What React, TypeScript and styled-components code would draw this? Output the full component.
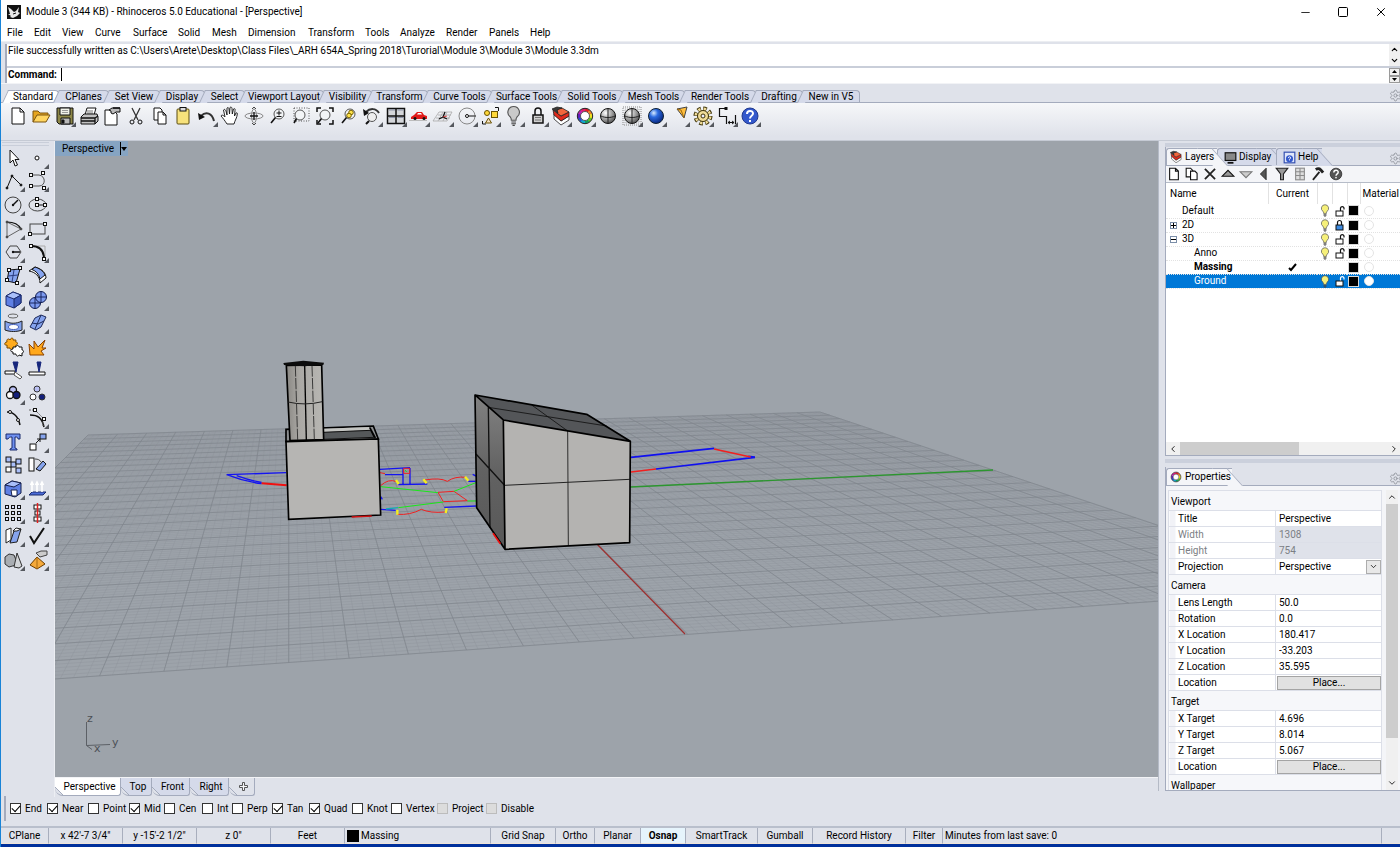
import React, { ReactNode } from 'react';
import styled, { createGlobalStyle, css } from 'styled-components';
import { ChevronDown, ChevronLeft, ChevronRight, ChevronUp, Minus, Settings, Square, X } from 'lucide-react';

const c = {
  chrome: '#dfe2ea',
  light: '#f4f5f8',
  line: '#a4abbd',
  soft: '#c9ced9',
  tab: '#d5daea',
  view: '#9da3aa',
  blue: '#0078d7',
};

const GlobalStyle = createGlobalStyle`
  * { box-sizing: border-box; }
  body { margin: 0; background: ${c.chrome}; color: #000; font: 10px/12px Roboto, "Liberation Sans", sans-serif; }
  button, input, select { font: inherit; color: inherit; margin: 0; padding: 0; border: 0; background: none; border-radius: 0; }
  svg { display: block; }
`;

/* ---------- window frame ---------- */

const Window = styled.div`
  display: flex;
  flex-direction: column;
  height: 100vh;
  min-height: 800px;
  border-left: 1px solid #1883d7;
  overflow: hidden;
`;

const TitleBar = styled.header`
  display: flex;
  align-items: center;
  height: 24px;
  padding-left: 6px;
  background: #fff;
  flex: none;
`;

const Title = styled.h1`
  flex: 1;
  margin: 0 0 0 5px;
  font-size: 10px;
  font-weight: 400;
`;

const WindowButton = styled.button`
  display: grid;
  place-items: center;
  width: 38px;
  height: 24px;
`;

const MenuBar = styled.nav`
  display: flex;
  gap: 12px;
  height: 17px;
  padding: 1px 0 0 6px;
  align-items: center;
  background: #fff;
  flex: none;
`;

const MenuItem = styled.button<{ $w: number }>`
  width: ${p => p.$w}px;
  text-align: left;
  white-space: nowrap;
`;

const CommandArea = styled.section`
  padding: 2px 0 0 4px;
  background: ${c.chrome};
  border-top: 1px solid #eceef2;
  flex: none;
`;

const CommandInner = styled.div`
  border-left: 2px double ${c.line};
  background: #fff;
`;

const History = styled.div`
  display: flex;
  height: 24px;
  justify-content: space-between;
  border-bottom: 2px solid ${c.soft};
`;

const HistoryText = styled.p`
  margin: 0;
  padding-left: 1px;
  line-height: 13px;
`;

const Stepper = styled.div<{ $boxed?: boolean }>`
  display: grid;
  width: 11px;
  background: #f0f0f0;
  button {
    display: grid;
    place-items: center;
    overflow: hidden;
    ${p => p.$boxed && css`border: 1px solid #9a9a9a;`}
  }
`;

const CommandLine = styled.div`
  display: flex;
  height: 15px;
`;

const CommandLabel = styled.label`
  padding-left: 1px;
  font-weight: 700;
  line-height: 14px;
`;

const CommandInput = styled.input`
  flex: 1;
  height: 13px;
  margin-left: 4px;
  border-left: 1px solid #000;
  outline: none;
`;

/* ---------- tool tabs and toolbar ---------- */

const TabStrip = styled.div`
  display: flex;
  align-items: flex-end;
  height: 20px;
  padding-left: 7px;
  border-top: 1px solid #f2f3f6;
  border-bottom: 1px solid ${c.line};
  background: ${c.chrome};
  flex: none;
`;

const ToolTab = styled.button<{ $w: number; $on?: boolean }>`
  position: relative;
  width: ${p => p.$w}px;
  height: 12px;
  border-top: 1px solid ${c.line};
  border-right: 1px solid ${c.line};
  border-radius: 0 4px 0 0;
  background: ${p => (p.$on ? '#fff' : c.tab)};
  white-space: nowrap;
  line-height: 12px;
  &::before {
    content: '';
    position: absolute;
    top: -1px;
    left: -3px;
    width: 7px;
    height: 12px;
    border-left: 1px solid ${c.line};
    border-top: 1px solid ${c.line};
    background: inherit;
    transform: skewX(-25deg);
  }
  span { position: relative; }
`;

const GearButton = styled.button`
  margin-left: auto;
  color: #8b8f98;
  margin-right: -2px;
`;

const Toolbar = styled.div`
  height: 38px;
  padding: 2px 0 0 5px;
  background: linear-gradient(#f6f7f9, ${c.chrome} 90%);
  border-bottom: 1px solid #c5cad4;
  flex: none;
`;

const ToolRow = styled.div`
  display: grid;
  width: 756px;
  grid-template-columns: repeat(32, 1fr);
  justify-items: center;
`;

const ToolButton = styled.button<{ $more?: boolean }>`
  position: relative;
  width: 22px;
  height: 22px;
  ${p => p.$more && css`
    &::after {
      content: '';
      position: absolute;
      right: 0;
      bottom: 0;
      border-left: 5px solid transparent;
      border-bottom: 5px solid #55585e;
    }
  `}
`;

/* ---------- body ---------- */

const Body = styled.div`
  display: grid;
  grid-template-columns: 54px minmax(0, 1fr) 242px;
  flex: 1;
  min-height: 0;
`;

const SideBar = styled.aside`
  padding: 1px 5px 0 1px;
  border-right: 1px solid #eceef3;
`;

const Grip = styled.div`
  height: 4px;
  border: solid ${c.soft};
  border-width: 1px 0;
`;

const SideGrid = styled.div`
  display: grid;
  grid-template: repeat(18, 1fr) / 24px 24px;
  height: 426px;
  place-items: center;
`;

const Center = styled.main`
  display: flex;
  flex-direction: column;
  min-width: 0;
`;

const Viewport = styled.div`
  position: relative;
  flex: 1;
  min-height: 0;
  background: ${c.view};
  overflow: hidden;
  > svg { width: 100%; height: 100%; }
`;

const ViewTitle = styled.button`
  position: absolute;
  top: 0;
  left: 0;
  display: flex;
  align-items: center;
  height: 15px;
  padding: 0 1px 0 7px;
  gap: 6px;
  background: #86a4c2;
  i {
    height: 13px;
    border-left: 1px solid #000;
    display: flex;
    align-items: center;
  }
  i::after {
    content: '';
    border: 3px solid transparent;
    border-top: 4px solid #000;
    border-bottom: 0;
  }
`;

const ViewTabs = styled.div`
  display: flex;
  height: 20px;
  border-top: 1px solid #f2f3f6;
`;

const ViewTab = styled.button<{ $w: number; $on?: boolean; $plain?: boolean }>`
  position: relative;
  display: grid;
  place-items: center;
  width: ${p => p.$w}px;
  height: 18px;
  border: solid ${c.line};
  border-width: 0 1px 1px 0;
  border-radius: 0 0 3px 8px;
  padding-left: 4px;
  background: linear-gradient(45deg, ${c.chrome} 0 5px, ${c.line} 5px 6px, ${p => (p.$on ? '#fff' : p.$plain ? c.chrome : c.tab)} 6px);
`;

/* ---------- right panels ---------- */

const PanelColumn = styled.aside`
  display: flex;
  flex-direction: column;
  min-height: 0;
  padding-left: 6px;
  margin-bottom: 6px;
  border-left: 1px solid #b4bac6;
`;

const Panel = styled.section<{ $grow?: boolean }>`
  display: flex;
  flex-direction: column;
  min-height: 0;
  border: 1px solid ${c.line};
  border-width: 0 0 1px 1px;
  flex: ${p => (p.$grow ? '1 1 0' : '0 0 324px')};
`;

const PanelGrip = styled.div`
  height: 6px;
  background: #cbd0dc;
  border-top: 2px solid ${c.chrome};
  flex: none;
`;

const Divider = styled.div`
  height: 11px;
  border: solid ${c.chrome};
  border-width: 3px 0 4px;
  background: #cbd0dc;
  flex: none;
`;

const PanelTabs = styled.div`
  display: flex;
  align-items: flex-end;
  height: 19px;
  background: ${c.chrome};
  border-bottom: 1px solid ${c.line};
  flex: none;
`;

const PanelTab = styled.button<{ $w: number; $on?: boolean }>`
  position: relative;
  display: flex;
  align-items: center;
  gap: 2px;
  width: ${p => p.$w}px;
  height: 17px;
  padding-left: 2px;
  border-top: 1px solid ${c.line};
  border-left: 1px solid ${c.line};
  border-radius: 3px 0 0 0;
  background: ${p => (p.$on ? c.light : c.tab)};
  white-space: nowrap;
  z-index: ${p => (p.$on ? 2 : 1)};
  & + & { padding-left: 6px; }
  &::after {
    content: '';
    position: absolute;
    z-index: -1;
    top: -1px;
    right: -3px;
    width: 14px;
    height: 17px;
    border-top: 1px solid ${c.line};
    border-right: 1px solid ${c.line};
    background: inherit;
    transform: skewX(42deg);
  }
`;

const LayerTools = styled.div`
  display: flex;
  gap: 2px;
  height: 17px;
  background: ${c.light};
  border-bottom: 1px solid #b6bcc8;
  flex: none;
`;

const LayerTool = styled.button`
  width: 16px;
  height: 16px;
`;

const LayerBody = styled.div`
  flex: 1;
  background: #fff;
  overflow: hidden;
`;

const LayerTable = styled.table`
  width: 100%;
  table-layout: fixed;
  border-collapse: collapse;
  th {
    height: 21px;
    padding: 0 0 0 4px;
    border-right: 1px solid #e2e2e2;
    font-weight: 400;
    text-align: left;
  }
  th:nth-child(2) { text-align: center; padding: 0; }
  th:last-child { border: 0; padding-left: 2px; }
`;

const LayerRow = styled.tr<{ $on?: boolean; $bold?: boolean }>`
  height: 14px;
  font-weight: ${p => (p.$bold ? 700 : 400)};
  color: ${p => (p.$on ? '#fff' : '#000')};
  background: ${p => (p.$on ? c.blue : '#fff')};
  td {
    padding: 0;
    height: 14px;
    line-height: 12px;
    border-bottom: 1px dotted #e2e2e2;
  }
  td svg { margin: auto; }
`;

const LayerName = styled.div<{ $depth: number }>`
  display: flex;
  align-items: center;
  height: 13px;
  gap: 5px;
  padding-left: ${p => 4 + p.$depth * 12}px;
`;

const Expander = styled.button`
  display: grid;
  place-items: center;
  width: 7px;
  height: 7px;
  border: 1px solid #7b8ea8;
  line-height: 5px;
`;

const Spacer = styled.span`
  width: 7px;
`;

const Swatch = styled.span`
  display: block;
  width: 11px;
  height: 11px;
  margin: 0 auto;
  background: #000;
  border: 1px solid #d8d8d8;
`;

const Material = styled.span`
  display: block;
  width: 10px;
  height: 10px;
  margin-left: 4px;
  border: 1px solid #e4e4e4;
  border-radius: 50%;
  background: #fff;
`;

const HScroll = styled.div`
  display: grid;
  grid-template-columns: 14px 119px 1fr 12px;
  height: 13px;
  background: #f0f0f0;
  flex: none;
  place-items: center;
`;

const Thumb = styled.div`
  width: 100%;
  height: 100%;
  background: #cdcdcd;
`;

const PropsBody = styled.div`
  display: flex;
  flex: 1;
  min-height: 0;
  gap: 4px;
  padding: 4px 2px 0 2px;
  background: ${c.light};
`;

const PropsClip = styled.div`
  flex: 1;
  overflow: hidden;
`;

const PropsTable = styled.table`
  width: 100%;
  table-layout: fixed;
  border-collapse: collapse;
  border: 1px solid #dcdfe8;
`;

const SectionRow = styled.tr`
  height: 20px;
  th { padding: 2px 0 0 2px; font-weight: 400; text-align: left; background: #f6f7fa; border-top: 1px solid #dcdfe8; }
`;

const PropRow = styled.tr<{ $off?: boolean }>`
  height: 16px;
  color: ${p => (p.$off ? '#7c7f85' : '#000')};
  th {
    height: 16px;
    padding: 0 0 0 9px;
    font-weight: 400;
    text-align: left;
    background: linear-gradient(to right, #f1f2f7 6px, #fff 6px);
    border: 1px solid #dcdfe8;
  }
  td { height: 16px; padding: 0; background: ${p => (p.$off ? c.chrome : '#fff')}; border: 1px solid #dcdfe8; }
`;

const ValueInput = styled.input`
  display: block;
  width: 100%;
  height: 14px;
  padding-left: 3px;
  outline: none;
`;

const SelectBox = styled.div`
  display: flex;
  height: 14px;
  select { flex: 1; padding-left: 3px; appearance: none; outline: none; min-width: 0; }
  span { display: grid; place-items: center; width: 15px; border: 1px solid #adadad; background: #e8e8e8; }
`;

const PlaceButton = styled.button`
  display: block;
  width: calc(100% - 1px);
  height: 14px;
  margin-left: 1px;
  border: 1px solid #a4a4a4;
  background: #e1e1e1;
`;

const VScroll = styled.div`
  display: grid;
  grid-template-rows: 14px 234px 1fr 14px;
  width: 12px;
  background: #f0f0f0;
  place-items: center;
`;

/* ---------- bottom bars ---------- */

const SnapBar = styled.form`
  display: flex;
  align-items: center;
  height: 25px;
  padding-left: 4px;
  margin: 2px 0 5px 3px;
  border-left: 2px double ${c.line};
  flex: none;
`;

const SnapItem = styled.label<{ $w: number; $off?: boolean }>`
  display: flex;
  align-items: center;
  gap: 4px;
  width: ${p => p.$w}px;
  white-space: nowrap;
  input {
    appearance: none;
    flex: none;
    width: 11px;
    height: 11px;
    border: 1px solid ${p => (p.$off ? '#bcbcbc' : '#333')};
    background: ${p => (p.$off ? '#dcdcdc' : '#fff')};
  }
  input:checked::before {
    content: '';
    display: block;
    width: 7px;
    height: 4px;
    margin: 1px;
    border: solid #000;
    border-width: 0 0 1px 1px;
    transform: rotate(-47deg);
  }
`;

const StatusBar = styled.footer`
  display: flex;
  height: 21px;
  border-top: 2px solid #b9bfcc;
  border-bottom: 3px solid #00309c;
  flex: none;
`;

const StatusCell = styled.button<{ $w?: number; $on?: boolean; $left?: boolean }>`
  display: flex;
  align-items: center;
  justify-content: ${p => (p.$left ? 'flex-start' : 'center')};
  gap: 2px;
  width: ${p => (p.$w ? p.$w + 'px' : 'auto')};
  flex: ${p => (p.$w ? 'none' : '1')};
  padding-left: ${p => (p.$left ? 2 : 0)}px;
  border-right: 1px solid #a8aebd;
  border-bottom: 1px solid #f0e4d8;
  background: ${p => (p.$on ? '#e6f4fc' : 'transparent')};
  font-weight: ${p => (p.$on ? 700 : 400)};
  white-space: nowrap;
`;

const StatusEnd = styled.span`
  width: 18px;
  border-bottom: 1px solid #f0e4d8;
`;

const LayerChip = styled.span`
  width: 12px;
  height: 12px;
  background: #000;
`;

/* ---------- icons, drawn on a 22 x 22 field ---------- */

const k = '#111';
const lens = (x = 12, y = 9, r = 5) => (
  <><circle cx={x} cy={y} r={r} fill="#f3f5f7" stroke="#555" /><path d={`M${x - r * .7} ${y + r * .7}L4 18`} stroke={k} strokeWidth="1.600" /></>
);
const ball = (fill: string, s = k) => <circle cx="11" cy="11" r="7.500" fill={fill} stroke={s} />;
const node = (x: number, y: number, fill = '#fff') => <rect key={`${x},${y}`} x={x - 1.5} y={y - 1.5} width="3" height="3" fill={fill} stroke={k} />;
const hues = ['#e02020', '#f08020', '#f0e020', '#60c820', '#10a060', '#10a8d0', '#2050d0', '#6020c0', '#c020b0', '#e02070'];
const wheel = (
  <g>
    {hues.map((h, i) => {
      const a = (i / 10) * Math.PI * 2, b = ((i + 1.1) / 10) * Math.PI * 2;
      return <path key={h} d={`M${11 + 6 * Math.sin(a)} ${11 - 6 * Math.cos(a)}A6 6 0 0 1 ${11 + 6 * Math.sin(b)} ${11 - 6 * Math.cos(b)}`} stroke={h} strokeWidth="3" fill="none" />;
    })}
    <circle cx="11" cy="11" r="7.700" fill="none" stroke="#222" strokeWidth="1" />
    <circle cx="11" cy="11" r="4.500" fill="#fff" stroke="#333" strokeWidth=".8" />
  </g>
);
const layersIcon = (
  <g stroke="#222" strokeWidth=".8" strokeLinejoin="round">
    <path d="M4 9l7 7 8-5v4l-8 5-7-6z" fill="#fff" />
    <path d="M3 5l8 6 8-4v4l-8 5-7-6z" fill="#e02a1c" />
    <path d="M7 4l5-1 7 4-8 4-4-3z" fill="#f2663c" />
    <path d="M2 4l5-2 5 1-5 2 1 3z" fill="#3a3a3a" />
  </g>
);
const bulb = (fill: string) => (
  <g><path d="M11 3a5 5 0 0 0-3 9c1 1 1 2 1 3h4c0-1 0-2 1-3a5 5 0 0 0-3-9z" fill={fill} stroke="#555" /><path d="M9 16.500h4M9 18h4M10 19.500h2" stroke="#444" /></g>
);
const helpIcon = (
  <g><circle cx="11" cy="11" r="8" fill="#3358cc" stroke="#20388c" /><path d="M8 9c0-4 6-4 6-.5 0 2.500-3 2-3 5" stroke="#fff" strokeWidth="2" fill="none" /><rect x="10" y="15" width="2" height="2" fill="#fff" /></g>
);

type Tool = [name: string, art: ReactNode, more?: boolean];

const toolbar: Tool[] = [
  ['New', <path d="M5 3h8l4 4v12H5zM13 3v4h4" fill="#fff" stroke={k} />],
  ['Open', <g stroke="#7a5410"><path d="M3 17V6h5l2 2h8v3" fill="#e5a520" /><path d="M3 17l4-7h13l-4 7z" fill="#ffd560" /></g>],
  ['Save', <g stroke={k}><path d="M3 3h16v16H5l-2-2z" fill="#8d8748" /><path d="M6 3h10v7H6z" fill="#f0f1e8" /><path d="M7 13h9v6H7z" fill="#b9b9b9" /><path d="M8 15h2v3H8z" fill={k} /><path d="M8 5.500h6M8 7.500h6" stroke="#999" /></g>, true],
  ['Print', <g stroke={k}><path d="M7 10l2-7h9l-2 7z" fill="#fff" /><path d="M9 6h6M9 8h6" stroke="#777" /><path d="M3 12l3-3h13l1 3v4l-3 3H3z" fill="#c2c2c2" /><path d="M3 13h14v6M3 16h14M17 13l3-2" fill="none" strokeWidth="1.300" /></g>],
  ['Document Properties', <g stroke={k}><path d="M4 5h8l4 4v11H4z" fill="#fff" /><path d="M8 5l3-2h8v4h-4l-3 2-2-1V6z" fill="#bbb" /><path d="M12 3h7" strokeWidth="1.500" /></g>],
  ['Cut', <g stroke={k} fill="none"><path d="M7 3l6 12M15 3L9 15" stroke="#333" strokeWidth="1.300" /><circle cx="7" cy="17" r="2" /><circle cx="15" cy="17" r="2" /></g>],
  ['Copy', <g fill="#fff" stroke={k}><path d="M5 3h6l2 2v10H5z" /><path d="M9 7h5l3 3v9H9zM14 7v3h3" /></g>],
  ['Paste', <g stroke={k}><rect x="5" y="4" width="12" height="15" rx="1" fill="#f7e27c" stroke="#5a4c10" /><rect x="8" y="2.500" width="6" height="3.500" fill="#ddd" /></g>],
  ['Undo', <g><path d="M5 11c5-5 11-3 13 5" fill="none" stroke="#333" strokeWidth="2" /><path d="M2 8l1 7 6-3z" fill={k} /></g>, true],
  ['Pan', <path d="M8 19c-2-3-4-6-6-8 1-2 3 0 4 1L4.500 5c1-1.500 2 0 2.500 1l1 4L8 3c1-1 2 0 2 1l.5 5L11 2.500c1-1 2 0 2 1l.3 5.500L14.500 4c1-1 2 0 1.500 1.500L15.500 11l1.500-3c1-.5 1.500 0 1.300 1C18 13 16 15 15 19z" fill="#fff" stroke={k} strokeWidth=".9" />],
  ['Rotate View', <g fill="none" stroke="#888"><ellipse cx="11" cy="11" rx="9" ry="3" /><ellipse cx="11" cy="11" rx="2.500" ry="7" /><path d="M11 7v8M7 11h8" stroke={k} strokeWidth="1.300" /><path d="M9 4l2-2 2 2M9 18l2 2 2-2" stroke="#444" /></g>],
  ['Zoom Dynamic', <g>{lens()}<path d="M9.500 8h5M12 5.500v5M9.500 11.500h5" stroke={k} /></g>],
  ['Zoom Window', <g><rect x="4" y="3" width="15" height="13" fill="none" stroke="#555" strokeDasharray="1 1.500" />{lens(10, 10)}</g>],
  ['Zoom Extents', <g>{lens(11, 10)}<path d="M3 7V3h4M15 3h4v4M19 15v4h-4M3 15v4h4" fill="none" stroke={k} strokeWidth="1.500" /></g>],
  ['Zoom Selected', <g>{lens()}<circle cx="13" cy="7.500" r="2.300" fill="#ffe34a" stroke="#776000" /><circle cx="11" cy="10.500" r="2.300" fill="#ffe34a" stroke="#776000" /></g>],
  ['Undo View', <g><circle cx="11" cy="12" r="4.500" fill="#eee" stroke="#555" /><path d="M8 16l-3 3" stroke={k} strokeWidth="2" /><path d="M5 7c4-4 10-4 13 1" fill="none" stroke="#333" strokeWidth="2" /><path d="M2 4l1 7 5-3z" fill={k} /></g>, true],
  ['Four Viewports', <g stroke={k}><rect x="2.500" y="3.500" width="17" height="15" fill="#d4d6da" strokeWidth="1.500" /><path d="M11 4v14M3 11h16" strokeWidth="1.500" /><path d="M4 5h6M12.500 5h6M4 12.500h6M12.500 12.500h6" stroke="#8d94a8" /></g>, true],
  ['Named View', <g><path d="M3 12l3-2 3-3h5l2 3 3 1v3H3z" fill="#e01818" /><path d="M9 9.500l1-1.500h3l1 1.500z" fill="#fff" /><circle cx="7" cy="13.500" r="1.500" fill={k} /><circle cx="16" cy="13.500" r="1.500" fill={k} /><path d="M1 15.500h18" stroke="#bbb" /></g>, true],
  ['Construction Plane', <g stroke="#aaa" strokeWidth=".8" fill="none"><path d="M1 16l6-9h13l-5 9zM4 13h14M6 10h13M6 16l5-9M11 16l4-9" /><path d="M11 12l-4 2M11 12l4 2M11 12l2-5" stroke={k} strokeWidth="1.300" /><path d="M11 12l4-1" stroke="#d22" /></g>, true],
  ['Radius', <g fill="none" stroke="#888"><circle cx="11" cy="11" r="8" /><path d="M11 11h9" stroke="#444" strokeWidth="1.300" /><circle cx="11" cy="11" r="1.500" fill="#fff" stroke={k} /></g>, true],
  ['Select', <g stroke="#6a5200"><circle cx="8" cy="8" r="2.500" fill="#ffd83a" /><rect x="12.500" y="6.500" width="6" height="6" fill="#ffd83a" /><path d="M9.500 13l3 5h-6z" fill="#f4e0c0" /><path d="M16 2.500h3.500V6M3.500 16v3H7" fill="none" stroke={k} /></g>, true],
  ['Hide', <g transform="translate(-2 -2) scale(1.150)">{bulb('#c9c9c9')}</g>, true],
  ['Lock', <g stroke={k} strokeWidth="1.500"><path d="M8 10V6a3 3 0 0 1 6 0v4" fill="none" /><rect x="6" y="10" width="10" height="8" fill="#d0d0d0" /><path d="M8 12.500h6M8 15h6" stroke="#777" strokeWidth="1" /></g>, true],
  ['Layers', layersIcon, true],
  ['Properties', wheel, true],
  ['Shade', <g>{ball('url(#steel)')}<path d="M11 4v14M4 11c4 2 10 2 14 0" fill="none" stroke="#222" /></g>],
  ['Shade Selected', <g><rect x="2" y="2" width="18" height="18" fill="none" stroke="#888" strokeDasharray="1 1" /><rect x="4" y="4" width="14" height="14" fill="none" stroke="#aaa" strokeDasharray="1 1" />{ball('url(#steel)')}<path d="M11 4v14M4 11c4 2 10 2 14 0" fill="none" stroke="#222" /></g>, true],
  ['Render', ball('url(#azure)', '#123'), true],
  ['Spotlight', <g><path d="M9 4l10-2-3 11z" fill="#ffbe3c" stroke="#444" /><path d="M9 4l4 1 3 8" fill="none" stroke="#a06a10" /></g>, true],
  ['Options', <g><circle cx="11" cy="11" r="7" fill="none" stroke="#3c3208" strokeWidth="5" strokeDasharray="3.300 2.200" /><circle cx="11" cy="11" r="7" fill="none" stroke="#f0dc98" strokeWidth="3" strokeDasharray="2.300 3.200" strokeDashoffset="-.5" /><circle cx="11" cy="11" r="5.500" fill="#f0dc98" stroke="#3c3208" /><circle cx="11" cy="11" r="2" fill="#eef" stroke="#3c3208" /></g>, true],
  ['Dimension', <g stroke={k} fill="none"><path d="M3.500 3v9M3 3.500h6M4 11.500h6M10.500 11v8M12 17.500h6M19.500 10v9" strokeWidth="1.200" /><rect x="9" y="2.500" width="2" height="2" fill={k} /><path d="M14 16l-2 1.500 2 1.500M16 16l2 1.500-2 1.500" /></g>, true],
  ['Help', helpIcon, true],
];

const sidebar: Tool[] = [
  ['Select', <path d="M7 3v13l3-3 2 6 2.500-1-2.500-5.500h4z" fill="#fff" stroke={k} />],
  ['Point', <circle cx="10" cy="11" r="2" fill="#fff" stroke={k} />, true],
  ['Polyline', <g stroke={k}><path d="M4 18L9 6l9 9" fill="none" /><circle cx="4" cy="18" r="1" fill={k} /><circle cx="9" cy="6" r="1" fill={k} /><circle cx="18" cy="15" r="1" fill={k} /></g>, true],
  ['Curve', <g><path d="M5 5h7c7 1 7 11 0 11H4" fill="none" stroke="#555" />{node(4, 5)}{node(16, 3)}{node(4, 16)}{node(17, 18)}</g>, true],
  ['Circle', <g fill="none" stroke="#444"><circle cx="10" cy="11" r="8" /><path d="M10 11l5-5" stroke={k} strokeWidth="1.500" /><circle cx="10" cy="11" r="1.200" fill={k} stroke="none" /></g>, true],
  ['Ellipse', <g><ellipse cx="10.500" cy="11" rx="8.500" ry="6" fill="none" stroke="#444" />{node(10, 5)}{node(10, 11)}{node(18, 11)}<path d="M12 11h5" stroke={k} /></g>, true],
  ['Arc', <g fill="none" stroke="#555"><path d="M4 4v15l14-8z" strokeWidth=".9" /><path d="M4 4c7 0 12 3 14 7" stroke={k} strokeWidth="1.200" /><circle cx="4" cy="4" r="1" fill={k} /><circle cx="4" cy="19" r="1" fill={k} /><circle cx="18" cy="11" r="1" fill={k} /></g>, true],
  ['Rectangle', <g><rect x="3" y="6" width="15" height="10" fill="none" stroke="#444" />{node(3, 16)}{node(18, 6)}</g>, true],
  ['Polygon', <g fill="none" stroke="#444"><path d="M7 5h7l4 6-4 6H7l-4-6z" /><path d="M10 11h7" stroke={k} strokeWidth="1.500" /><circle cx="10" cy="11" r="1.200" fill={k} stroke="none" /></g>, true],
  ['Fillet', <g><path d="M4 5h14v14" fill="none" stroke="#aaa" /><path d="M4 5c9 0 13 4 13 13" fill="none" stroke={k} strokeWidth="2" />{node(4, 5)}{node(17, 18)}</g>, true],
  ['Surface', <g><path d="M6 5l11-1-4 14-9-2z" fill="#86a4ee" stroke={k} /><path d="M11 5L9 17M5 11l10-1" stroke="#2a3d80" />{node(6, 5)}{node(17, 3)}{node(4, 15)}{node(14, 18)}</g>, true],
  ['Loft', <g stroke={k}><path d="M2 6l6-4c7 2 11 6 11 11l-6 5c0-7-5-11-11-12z" fill="#fff" /><path d="M5 4.500L8 2c6 2 9 5 10 8l-5 4c-1-5-4-8-8-9.500z" fill="#86a4ee" /></g>, true],
  ['Box', <g stroke="#1a2a6c"><path d="M3 7l7-4 8 3v8l-7 5-8-3z" fill="#5f80e4" /><path d="M3 7l8 3 7-4-8-3z" fill="#a9bffa" /><path d="M11 10v9l7-5V6z" fill="#3c58b8" /></g>, true],
  ['Sphere', <g stroke="#101c50"><circle cx="8" cy="14" r="5.500" fill="#7c9af0" /><circle cx="14" cy="8" r="5.500" fill="#7c9af0" /><path d="M2.500 14h11M8 8.500v11M8.500 8h11M14 2.500v11" strokeWidth=".9" /></g>, true],
  ['Solid Creation', <g stroke="#222"><ellipse cx="10" cy="4" rx="5" ry="2" fill="none" stroke="#666" /><path d="M2 9c5 3 11 3 17 0v9c-5 2-12 2-17 0z" fill="#86a4ee" /><ellipse cx="10.500" cy="15" rx="5" ry="2.500" fill="#fff" stroke="#4a62b8" /></g>, true],
  ['Surface Tools', <g stroke="#1c2858"><path d="M8 6l6-3 5 2-5 10-5 3-6-3z" fill="#86a4ee" /><path d="M5 11l6 1 6-3M14 3l-6 14" /></g>, true],
  ['Boolean Union', <g><path d="M4 6c-1-3 2-4 3-2 1-3 4-2 3 0l3 0c0 1-1 2 0 2 2 0 2 3 0 3l-1 3-2 0c0 2-3 2-3 0l-3 0V9C1 10 1 6 4 6z" fill="#ffab1c" stroke="#7a4a00" /><path d="M10 11l3 0c0-2 3-2 3 0l3 0v3c2 0 2 3 0 3v3l-3-1c-1 2-3 1-3-1l-3 0v-2c-3 0-3-3 0-3z" fill="#fff" stroke={k} /></g>],
  ['Explode', <path d="M3 19L2 8l5 5V5l4 6 7-7-3 8 4 0-5 3 3 4z" fill="#ffa81c" stroke="#8a4200" />],
  ['Trim', <g stroke={k}><path d="M2 11h10v3H2z" fill="#fff" /><path d="M12 12l7 5-2 2-6-4z" fill="#fff" stroke="#555" /><path d="M10 2h5l-2 10z" fill="#16267c" stroke="#16267c" /></g>],
  ['Split', <g stroke={k}><path d="M2 12h16v3H2z" fill="#fff" /><path d="M10 2h4l-2 10z" fill="#16267c" stroke="#16267c" /></g>],
  ['Group', <g stroke={k} strokeWidth="1.300"><circle cx="10" cy="7" r="3.500" fill="#b9bff4" /><circle cx="7" cy="12" r="3.500" fill="#fff" /><circle cx="13.500" cy="12" r="3.500" fill="#14207a" /></g>, true],
  ['Ungroup', <g stroke="#333"><circle cx="10" cy="6" r="3" fill="#b9bff4" /><circle cx="6" cy="14" r="3" fill="#fff" /><circle cx="15" cy="14" r="3" fill="#14207a" /></g>],
  ['Edit Points', <g><path d="M4 5c7 0 11 4 13 13" fill="none" stroke={k} strokeWidth="1.500" /><circle cx="7" cy="5" r="1.500" fill="#fff" stroke={k} /><circle cx="15" cy="13" r="1.500" fill="#fff" stroke={k} /></g>],
  ['Control Points', <g><path d="M3 8c8 0 12 3 14 12" fill="none" stroke={k} strokeWidth="1.500" /><path d="M2 3h6l8 8v8" fill="none" stroke="#666" strokeDasharray="2 1" />{node(8, 3)}{node(17, 12)}</g>, true],
  ['Text', <path d="M3 3h14v5h-2c0-2-1-2-3-2v11l2 1v1H7v-1l2-1V6C7 6 6 6 5 8H3z" fill="#6f90f0" stroke="#1a2a6c" />],
  ['Move', <g stroke={k}><rect x="3" y="13" width="6" height="6" fill="#fff" /><rect x="13" y="3" width="6" height="5" fill="#86a4ee" /><path d="M9 12l4-4M10 8h3v3" fill="none" /></g>, true],
  ['Copy', <g stroke={k}>{[[3, 3], [3, 13], [8, 8], [13, 14], [13, 5]].map(([x, y], i) => <rect key={i} x={x} y={y} width="5" height="5" fill={i === 1 ? '#fff' : '#a9bffa'} />)}</g>],
  ['Rotate', <g stroke={k}><rect x="2" y="4" width="5" height="13" fill="#fff" /><path d="M9 15l7-8 3 3-6 7z" fill="#86a4ee" /><path d="M8 5c3 0 5 1 6 3" fill="none" stroke="#444" /></g>],
  ['Scale', <g stroke="#16204c"><path d="M2 7l7-4 9 2v10l-6 4-10-3z" fill="#5f80e4" /><path d="M2 7l9 2 7-4-9-2z" fill="#a9bffa" /><path d="M8 12h6v6l-5 0z" fill="#fff" /></g>, true],
  ['Project', <g><path d="M2 17l3-3h14l-3 3z" fill="#4c6cd8" stroke="#1a2a6c" /><path d="M5 14V5M10 14V5M15 14V5M3.500 7L5 4l1.500 3M8.500 7L10 4l1.500 3M13.500 7L15 4l1.500 3" stroke="#fff" strokeWidth="1.600" fill="none" /></g>, true],
  ['Array', <g>{[4, 10, 16].map(x => [5, 11, 17].map(y => node(x, y, '#dbe4ff')))}</g>, true],
  ['Align', <g stroke={k} fill="#fff"><rect x="7" y="3" width="7" height="4" /><rect x="8" y="9" width="5" height="4" /><rect x="7" y="15" width="7" height="4" /><path d="M10.500 1v20" stroke="#e02020" strokeWidth="1.500" /></g>, true],
  ['Shear', <g stroke="#222"><path d="M3 5l5-2v12l-5 3z" fill="#fff" /><path d="M7 18l4-12 7-2-4 13z" fill="#86a4ee" /><path d="M10 6l3-3 5 1-4 2z" fill="#fff" /></g>, true],
  ['Check', <path d="M3 11l4 7L17 3" fill="none" stroke={k} strokeWidth="2" />, true],
  ['Solids', <g stroke="#333"><path d="M2 8l4-3 5 1 2 5v5l-7 2-4-3z" fill="#a9adb2" /><path d="M14 4l5 13-3 2-5-1z" fill="#d3d5d8" /></g>, true],
  ['Extract', <g><path d="M3 16l7-8 8 7-8 5z" fill="#f5a93a" stroke="#6a3c00" /><path d="M10 8v12" stroke="#a86a10" /><path d="M9 4l5-2h6v4l-7 2z" fill="#ccc" stroke="#444" /></g>, true],
];

function Icon({ children, size = 22 }: { children: ReactNode; size?: number }) {
  return <svg width={size} height={size} viewBox="0 0 22 22" fill="none" aria-hidden="true">{children}</svg>;
}

const HiddenSvg = styled.svg`
  position: absolute;
`;

const Defs = () => (
  <HiddenSvg width="0" height="0" aria-hidden="true">
    <defs>
      <radialGradient id="steel" cx=".35" cy=".3" r=".8"><stop offset="0" stopColor="#fff" /><stop offset=".6" stopColor="#909090" /><stop offset="1" stopColor="#444" /></radialGradient>
      <radialGradient id="azure" cx=".35" cy=".3" r=".8"><stop offset="0" stopColor="#d8ecff" /><stop offset=".35" stopColor="#2a6ae0" /><stop offset="1" stopColor="#021c70" /></radialGradient>
    </defs>
  </HiddenSvg>
);

/* ---------- 3D scene ---------- */

// Corners of the ground plane as seen by the camera: far left, far right, near right, near left.
const quad = [[88, 435], [820, 412], [1345, 588], [-172, 695]];

function project(u: number, v: number) {
  const [[x0, y0], [x1, y1], [x2, y2], [x3, y3]] = quad;
  const dx1 = x1 - x2, dx2 = x3 - x2, sx = x0 - x1 + x2 - x3;
  const dy1 = y1 - y2, dy2 = y3 - y2, sy = y0 - y1 + y2 - y3;
  const d = dx1 * dy2 - dx2 * dy1;
  const g = (sx * dy2 - dx2 * sy) / d;
  const h = (dx1 * sy - sx * dy1) / d;
  const w = g * u + h * v + 1;
  const x = ((x1 - x0 + g * x1) * u + (x3 - x0 + h * x3) * v + x0) / w;
  const y = ((y1 - y0 + g * y1) * u + (y3 - y0 + h * y3) * v + y0) / w;
  return `${x.toFixed(1)} ${y.toFixed(1)}`;
}

function gridPath(cells: number) {
  let d = '';
  for (let i = 0; i <= cells; i++) {
    const t = i / cells;
    d += `M${project(t, 0)}L${project(t, 1)}M${project(0, t)}L${project(1, t)}`;
  }
  return d;
}

function Scene() {
  return (
    <svg viewBox="55 141 1103 636" preserveAspectRatio="xMinYMin slice" fill="none" role="img" aria-label="Perspective view of the massing model">
      <path d={gridPath(140)} stroke="#8d939b" strokeWidth=".6" opacity=".65" />
      <path d={gridPath(28)} stroke="#7f858c" strokeWidth=".7" />
      <path d="M545 491L993 470" stroke="#2c962f" strokeWidth="1.300" />
      <path d="M545 491L685 634" stroke="#9c3030" strokeWidth="1.300" />

      <g transform="translate(210 340) scale(.33333)" strokeWidth="4">
        <path d="M228 398L50 404Q100 424 155 431M80 407Q120 422 155 427M510 388L600 383M525 404L578 403M579 384V432M600 384V432M565 434L652 432M775 424H797M788 403L800 409M512 508L557 511M703 502L800 498M512 470L517 478" stroke="#1414f0" />
        <path d="M155 430L230 436" stroke="#f01010" strokeWidth="6" />
        <path d="M510 398L525 401M581 385H599V400H581ZM512 437Q535 415 560 425M645 420Q690 412 712 424Q735 408 768 412M684 457L732 454L772 482L700 485ZM562 523Q600 526 634 508Q660 520 706 516" stroke="#f02020" strokeWidth="3" />
        <path d="M512 440L684 458M732 454L800 427M565 503L700 486M772 483H800M585 390L590 396" stroke="#18e818" strokeWidth="3" />
        <path d="M528 507L564 503" stroke="#10a8b8" />
        <path d="M558 420L566 432M640 418L650 430M765 410L775 422M562 510V524M710 505L707 519" stroke="#f4ee20" strokeWidth="7" />

        <path d="M228 268L490 258L505 297L228 305Z" fill="#8c8e90" stroke="#000" strokeWidth="5" />
        <path d="M340 266L482 261L484 270L340 276Z" fill="#c4c5c2" />
        <path d="M340 277L482 271L492 292L340 298Z" fill="#55585a" stroke="#111" strokeWidth="3" />
        <path d="M479 262L496 294" stroke="#000" strokeWidth="5" />
        <path d="M229 76L335 75L341 299L240 302Z" fill="url(#tower)" stroke="#000" strokeWidth="5" />
        <path d="M284 76L289 300" stroke="#000" />
        <path d="M256 76L263 300M306 76L313 299" stroke="#222" strokeWidth="2.500" strokeDasharray="34 4" />
        <path d="M234 186Q285 198 337 185" stroke="#222" strokeWidth="3" />
        <path d="M220 69L280 62L342 68L340 75L282 79L222 75Z" fill="#0c0c0c" />
        <path d="M228 305L505 297L512 525L236 538Z" fill="#b6b5b3" stroke="#000" strokeWidth="5" />
        <path d="M425 531L485 528" stroke="#d01010" strokeWidth="5" />
      </g>

      <g transform="translate(460 380) scale(.33333)" strokeWidth="5">
        <path d="M513 232L762 205M588 267L885 232M865 229L885 231" stroke="#1010f0" />
        <path d="M762 207L872 231M513 276L588 267" stroke="#f02020" />
        <path d="M45 45L130 120L135 508L50 383Z" fill="url(#shade)" />
        <path d="M45 45L380 103L511 184L130 120Z" fill="#545659" />
        <path d="M130 120L511 184L509 488L135 508Z" fill="#b4b3b1" />
        <path d="M85 82L90 443M48 222L133 315" stroke="#111" strokeWidth="4" />
        <path d="M323 153L325 497M85 82L440 138M215 75L323 153" stroke="#111" strokeWidth="2.500" />
        <path d="M133 316L509 298" stroke="#222" strokeWidth="3" />
        <path d="M45 45L380 103L511 184L509 488L135 508L50 383ZM45 45L130 120L511 184M130 120L135 508" stroke="#000" strokeWidth="5" strokeLinejoin="round" />
        <path d="M99 460L121 491" stroke="#f01010" />
      </g>

      <g stroke="#5c6066">
        <path d="M86.500 722V745.500L110 744.500M86.500 745.500L92 749.500" />
      </g>
      <g fill="#4c5056" fontFamily="DejaVu Sans, sans-serif" fontSize="11">
        <text x="87" y="722">z</text>
        <text x="112" y="746">y</text>
        <text x="94" y="752">x</text>
      </g>
      <defs>
        <linearGradient id="tower"><stop offset="0" stopColor="#8a8884" /><stop offset=".35" stopColor="#aaa8a4" /><stop offset="1" stopColor="#b8b7b3" /></linearGradient>
        <linearGradient id="shade" x2="0" y2="1"><stop offset="0" stopColor="#828282" /><stop offset=".5" stopColor="#626262" /><stop offset="1" stopColor="#585858" /></linearGradient>
      </defs>
    </svg>
  );
}

/* ---------- data ---------- */

const menus: [string, number][] = [['File', 15], ['Edit', 16], ['View', 21], ['Curve', 26], ['Surface', 33], ['Solid', 22], ['Mesh', 24], ['Dimension', 48], ['Transform', 45], ['Tools', 23], ['Analyze', 34], ['Render', 31], ['Panels', 29], ['Help', 22]];
const toolTabs: [string, number][] = [['Standard', 51], ['CPlanes', 50], ['Set View', 51], ['Display', 45], ['Select', 40], ['Viewport Layout', 79], ['Visibility', 48], ['Transform', 56], ['Curve Tools', 64], ['Surface Tools', 70], ['Solid Tools', 61], ['Mesh Tools', 62], ['Render Tools', 71], ['Drafting', 47], ['New in V5', 57]];
const snaps: [string, number, boolean, boolean?][] = [['End', 37, true], ['Near', 41, true], ['Point', 41, false], ['Mid', 35, true], ['Cen', 38, false], ['Int', 30, false], ['Perp', 40, false], ['Tan', 37, true], ['Quad', 43, true], ['Knot', 39, false], ['Vertex', 46, false], ['Project', 49, false, true], ['Disable', 50, false, true]];

type Layer = { name: string; depth: number; open?: boolean; lock?: 'open' | 'shut'; current?: boolean; on?: boolean };
const layers: Layer[] = [
  { name: 'Default', depth: 0, lock: 'open' },
  { name: '2D', depth: 0, open: false, lock: 'shut' },
  { name: '3D', depth: 0, open: true, lock: 'open' },
  { name: 'Anno', depth: 1, lock: 'open' },
  { name: 'Massing', depth: 1, current: true },
  { name: 'Ground', depth: 1, lock: 'open', on: true },
];

type Prop = { label: string; value?: string; kind?: 'off' | 'select' | 'place' };
const sections: { title: string; rows: Prop[] }[] = [
  { title: 'Viewport', rows: [{ label: 'Title', value: 'Perspective' }, { label: 'Width', value: '1308', kind: 'off' }, { label: 'Height', value: '754', kind: 'off' }, { label: 'Projection', value: 'Perspective', kind: 'select' }] },
  { title: 'Camera', rows: [{ label: 'Lens Length', value: '50.0' }, { label: 'Rotation', value: '0.0' }, { label: 'X Location', value: '180.417' }, { label: 'Y Location', value: '-33.203' }, { label: 'Z Location', value: '35.595' }, { label: 'Location', kind: 'place' }] },
  { title: 'Target', rows: [{ label: 'X Target', value: '4.696' }, { label: 'Y Target', value: '8.014' }, { label: 'Z Target', value: '5.067' }, { label: 'Location', kind: 'place' }] },
  { title: 'Wallpaper', rows: [] },
];

const layerTools: Tool[] = [
  ['New Layer', <path d="M5 3h8l4 4v12H5zM13 3v4h4" fill="#fff" stroke={k} strokeWidth="1.500" />],
  ['New Sublayer', <g fill="#fff" stroke={k} strokeWidth="1.500"><path d="M3 3h6l3 3v9H3z" /><path d="M9 7h6l3 3v9H9z" /></g>],
  ['Delete', <path d="M4 4l14 14M18 4L4 18" stroke="#222" strokeWidth="2.500" />],
  ['Move Up', <path d="M3 14h16l-8-8z" fill="#999" stroke={k} strokeWidth="1.500" />],
  ['Move Down', <path d="M3 8h16l-8 8z" fill="#ccc" stroke="#777" strokeWidth="1.500" />],
  ['Move Left', <path d="M14 3v16L6 11z" fill="#555" stroke={k} />],
  ['Filter', <path d="M3 3h16l-6 8v8h-4v-8z" fill="#999" stroke="#222" strokeWidth="1.500" />],
  ['Columns', <g stroke="#8a8a8a" strokeWidth="1.500"><rect x="5" y="3" width="12" height="16" fill="#ddd" /><path d="M5 8h12M5 13h12M11 3v16" /></g>],
  ['Tools', <g stroke="#222" strokeWidth="2.500"><path d="M4 19L13 8" /><path d="M8 5c4-3 6-1 10 4" strokeWidth="4" /></g>],
  ['Help', <g><circle cx="11" cy="11" r="8" fill="#555" stroke="#222" /><path d="M8 9c0-4 6-4 6-.5 0 2.500-3 2-3 5" stroke="#fff" strokeWidth="2" /><rect x="10" y="15" width="2" height="2" fill="#fff" /></g>],
];

function LockIcon({ shut, on }: { shut: boolean; on?: boolean }) {
  return (
    <svg width="11" height="12" viewBox="0 0 11 12" fill="none" aria-label={shut ? 'Locked' : 'Unlocked'}>
      <path d={shut ? 'M3.500 6V3.500a2 2 0 0 1 4 0V6' : 'M6.500 6V3a1.800 1.800 0 0 1 3.500 0v1.500'} stroke={on ? '#fff' : '#111'} strokeWidth="1.200" />
      <rect x="2" y="6" width="7" height="5" fill={shut ? '#3c8ae0' : '#fff'} stroke="#111" />
    </svg>
  );
}

function LayersPanel() {
  return (
    <Panel $grow>
      <PanelTabs>
        <PanelTab $w={51} $on><Icon size={14}>{layersIcon}</Icon>Layers</PanelTab>
        <PanelTab $w={59}><Icon size={13}><rect x="2" y="3" width="18" height="13" fill="#888" stroke={k} strokeWidth="2" /><path d="M6 20h10" stroke={k} strokeWidth="3" /></Icon>Display</PanelTab>
        <PanelTab $w={46}><Icon size={13}><rect x="2" y="2" width="18" height="18" fill="#dfe6fa" stroke="#3450b0" strokeWidth="2" /><circle cx="11" cy="13" r="6" fill="#3358cc" /><path d="M9 12c0-3 4-3 4 0l-2 2v2" stroke="#fff" strokeWidth="1.500" /></Icon>Help</PanelTab>
        <GearButton aria-label="Panel options"><Settings size={13} strokeWidth={1.5} /></GearButton>
      </PanelTabs>
      <LayerTools>{layerTools.map(([n, art]) => <LayerTool key={n} aria-label={n}><Icon size={16}>{art}</Icon></LayerTool>)}</LayerTools>
      <LayerBody>
        <LayerTable>
          <colgroup><col width="102" /><col width="49" /><col width="15" /><col width="15" /><col width="13" /><col /></colgroup>
          <thead><tr><th>Name</th><th>Current</th><th /><th /><th /><th>Material</th></tr></thead>
          <tbody>
            {layers.map(l => (
              <LayerRow key={l.name} $on={l.on} $bold={l.current}>
                <td><LayerName $depth={l.depth}>
                  {l.open === undefined ? <Spacer /> : (
                    <Expander aria-label={l.open ? 'Collapse' : 'Expand'}>
                      <svg width="5" height="5" viewBox="0 0 5 5" stroke="#000"><path d={l.open ? 'M0 2.500h5' : 'M0 2.500h5M2.500 0v5'} /></svg>
                    </Expander>
                  )}
                  {l.name}
                </LayerName></td>
                <td>{l.current && <svg width="9" height="9" viewBox="0 0 9 9" fill="none" stroke="#000" strokeWidth="2"><path d="M1 5l2 2 5-6" /></svg>}</td>
                <td>{l.lock && <svg width="10" height="13" viewBox="5 2 12 18">{bulb('#f6f07a')}</svg>}</td>
                <td>{l.lock && <LockIcon shut={l.lock === 'shut'} on={l.on} />}</td>
                <td><Swatch /></td>
                <td><Material /></td>
              </LayerRow>
            ))}
          </tbody>
        </LayerTable>
      </LayerBody>
      <HScroll><ChevronLeft size={10} /><Thumb /><span /><ChevronRight size={10} /></HScroll>
    </Panel>
  );
}

function PropertyValue({ id, row }: { id: string; row: Prop }) {
  if (row.kind === 'place') return <PlaceButton id={id} type="button">Place...</PlaceButton>;
  if (row.kind === 'select') {
    return <SelectBox><select id={id}><option>{row.value}</option></select><span><ChevronDown size={9} /></span></SelectBox>;
  }
  return <ValueInput id={id} defaultValue={row.value} readOnly={row.kind === 'off'} />;
}

function PropertiesPanel() {
  return (
    <Panel>
      <PanelTabs>
        <PanelTab $w={66} $on><Icon size={14}>{wheel}</Icon>Properties</PanelTab>
        <GearButton aria-label="Panel options"><Settings size={13} strokeWidth={1.5} /></GearButton>
      </PanelTabs>
      <PropsBody>
        <PropsClip>
          <PropsTable>
            <colgroup><col width="107" /><col /></colgroup>
            {sections.map(s => (
              <tbody key={s.title}>
                <SectionRow><th colSpan={2} scope="rowgroup">{s.title}</th></SectionRow>
                {s.rows.map(r => {
                  const id = `${s.title}-${r.label}`.replace(' ', '-').toLowerCase();
                  return (
                    <PropRow key={id} $off={r.kind === 'off'}>
                      <th scope="row"><label htmlFor={id}>{r.label}</label></th>
                      <td><PropertyValue id={id} row={r} /></td>
                    </PropRow>
                  );
                })}
              </tbody>
            ))}
          </PropsTable>
        </PropsClip>
        <VScroll><ChevronUp size={10} /><Thumb /><span /><ChevronDown size={10} /></VScroll>
      </PropsBody>
    </Panel>
  );
}

export default function App() {
  return (
    <Window>
      <GlobalStyle />
      <Defs />
      <TitleBar>
        <svg width="14" height="14" viewBox="0 0 14 14" aria-hidden="true">
          <rect width="14" height="14" fill="#111" />
          <path d="M1 2l3 2 3 3 2-1 3-4-1 5 2 1-3 3-4 2-3-1 1-1-3-2 2 0z" fill="#e8e8e8" />
          <path d="M6 9l3-1" stroke="#111" />
        </svg>
        <Title>Module 3 (344 KB) - Rhinoceros 5.0 Educational - [Perspective]</Title>
        <WindowButton aria-label="Minimize"><Minus size={13} strokeWidth={1.5} /></WindowButton>
        <WindowButton aria-label="Maximize"><Square size={12} strokeWidth={2} /></WindowButton>
        <WindowButton aria-label="Close"><X size={14} strokeWidth={1.7} /></WindowButton>
      </TitleBar>
      <MenuBar>{menus.map(([m, w]) => <MenuItem key={m} $w={w}>{m}</MenuItem>)}</MenuBar>
      <CommandArea>
        <CommandInner>
          <History>
            <HistoryText>File successfully written as C:\Users\Arete\Desktop\Class Files\_ARH 654A_Spring 2018\Turorial\Module 3\Module 3\Module 3.3dm</HistoryText>
            <Stepper><button aria-label="Scroll up"><ChevronUp size={9} strokeWidth={3} /></button><button aria-label="Scroll down"><ChevronDown size={9} strokeWidth={3} /></button></Stepper>
          </History>
          <CommandLine>
            <CommandLabel htmlFor="command">Command:</CommandLabel>
            <CommandInput id="command" />
            <Stepper $boxed>
              <button aria-label="Previous command"><svg width="5" height="3"><path d="M0 3h5L2.500 0z" /></svg></button>
              <button aria-label="Next command"><svg width="5" height="3"><path d="M0 0h5L2.500 3z" /></svg></button>
            </Stepper>
          </CommandLine>
        </CommandInner>
      </CommandArea>
      <TabStrip>
        {toolTabs.map(([t, w], i) => <ToolTab key={t} $w={w} $on={i === 0}><span>{t}</span></ToolTab>)}
        <GearButton aria-label="Toolbar options"><Settings size={13} strokeWidth={1.5} /></GearButton>
      </TabStrip>
      <Toolbar>
        <ToolRow>{toolbar.map(([n, art, more]) => <ToolButton key={n} aria-label={n} $more={more}><Icon>{art}</Icon></ToolButton>)}</ToolRow>
      </Toolbar>
      <Body>
        <SideBar>
          <Grip />
          <SideGrid>{sidebar.map(([n, art, more]) => <ToolButton key={n} aria-label={n} $more={more}><Icon>{art}</Icon></ToolButton>)}</SideGrid>
        </SideBar>
        <Center>
          <Viewport>
            <Scene />
            <ViewTitle>Perspective<i /></ViewTitle>
          </Viewport>
          <ViewTabs>
            <ViewTab $w={66} $on>Perspective</ViewTab>
            <ViewTab $w={31}>Top</ViewTab>
            <ViewTab $w={38}>Front</ViewTab>
            <ViewTab $w={39}>Right</ViewTab>
            <ViewTab $w={26} $plain aria-label="New viewport tab"><svg width="9" height="9" viewBox="0 0 9 9" fill="#f4f5f8" stroke="#555"><path d="M3.500.5h2v3h3v2h-3v3h-2v-3h-3v-2h3z" /></svg></ViewTab>
          </ViewTabs>
        </Center>
        <PanelColumn>
          <PanelGrip />
          <LayersPanel />
          <Divider />
          <PropertiesPanel />
        </PanelColumn>
      </Body>
      <SnapBar>
        {snaps.map(([n, w, on, off]) => <SnapItem key={n} $w={w} $off={off}><input type="checkbox" defaultChecked={on} disabled={off} />{n}</SnapItem>)}
      </SnapBar>
      <StatusBar>
        <StatusCell $w={48}>CPlane</StatusCell>
        <StatusCell $w={74}>x 42'-7 3/4"</StatusCell>
        <StatusCell $w={74}>y -15'-2 1/2"</StatusCell>
        <StatusCell $w={74}>z 0"</StatusCell>
        <StatusCell $w={74}>Feet</StatusCell>
        <StatusCell $w={146} $left><LayerChip />Massing</StatusCell>
        <StatusCell $w={65}>Grid Snap</StatusCell>
        <StatusCell $w={39}>Ortho</StatusCell>
        <StatusCell $w={46}>Planar</StatusCell>
        <StatusCell $w={45} $on>Osnap</StatusCell>
        <StatusCell $w={72}>SmartTrack</StatusCell>
        <StatusCell $w={55}>Gumball</StatusCell>
        <StatusCell $w={93}>Record History</StatusCell>
        <StatusCell $w={37}>Filter</StatusCell>
        <StatusCell $left>Minutes from last save: 0</StatusCell>
        <StatusEnd />
      </StatusBar>
    </Window>
  );
}
